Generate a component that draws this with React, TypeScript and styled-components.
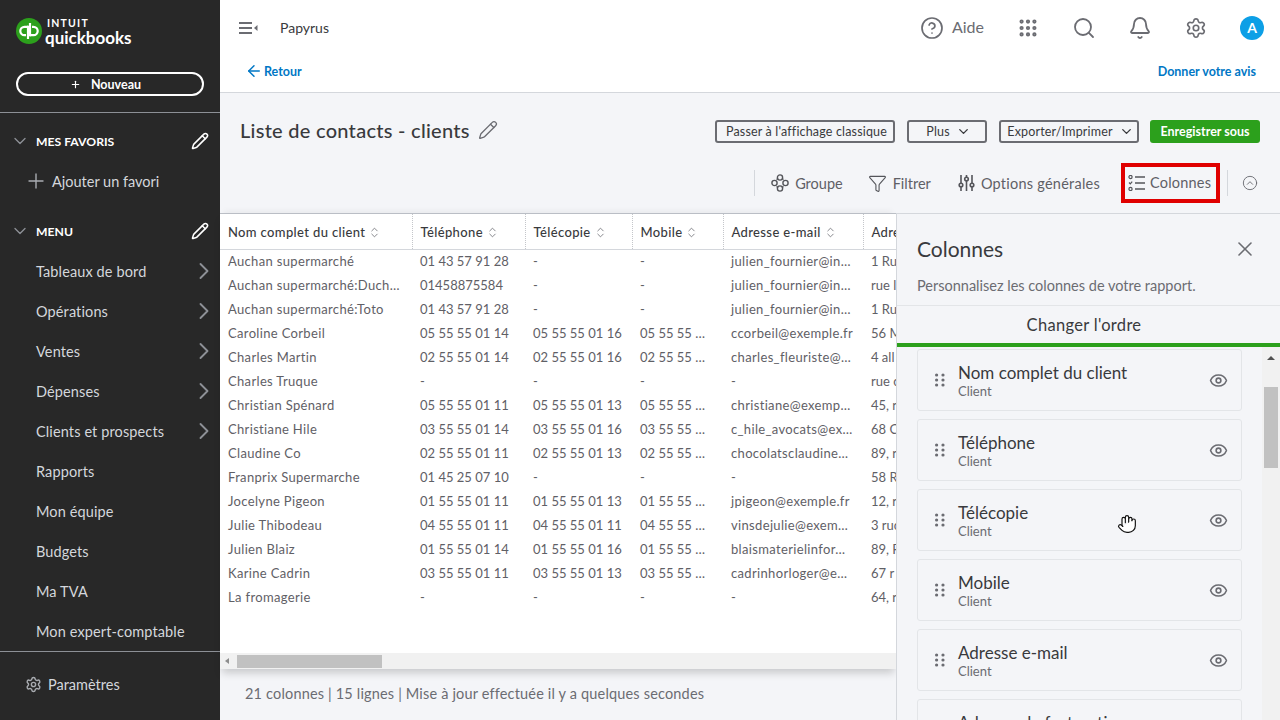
import styled, { createGlobalStyle } from "styled-components";
import {
  ArrowLeft,
  Bell,
  ChevronDown,
  ChevronRight,
  ChevronsUpDown,
  CircleChevronUp,
  CircleHelp,
  Eye,
  Funnel,
  Grip,
  Hand,
  Pencil,
  Plus,
  Search,
  Settings,
  X,
} from "lucide-react";

const FONT = `"Lato", "Open Sans", sans-serif`;

const GlobalStyle = createGlobalStyle`
  html, body {
    margin: 0;
    padding: 0;
    height: 100%;
    overflow: hidden;
    font-family: ${FONT};
    color: #393a3d;
    background: #f4f5f8;
  }
  * { box-sizing: border-box; }
`;

const Page = styled.div`
  display: flex;
  width: 1280px;
  height: 720px;
  overflow: hidden;
  position: relative;
`;

/* ---------- sidebar ---------- */
const Sidebar = styled.aside`
  width: 220px;
  flex: none;
  background: #282828;
  color: #d4d7dc;
  display: flex;
  flex-direction: column;
`;
const LogoRow = styled.div`
  height: 72px;
  padding: 18px 0 0 16px;
  display: flex;
  gap: 3px;
`;
const LogoWords = styled.div`
  display: flex;
  flex-direction: column;
  color: #fff;
`;
const LogoIntuit = styled.span`
  font-size: 10.5px;
  line-height: 11px;
  font-weight: 700;
  letter-spacing: 1.2px;
  margin-left: 2px;
`;
const LogoName = styled.span`
  font-size: 17px;
  line-height: 18px;
  font-weight: 700;
`;
const NewButton = styled.button`
  margin: 0 16px 16px;
  height: 24px;
  border: 2px solid #fff;
  border-radius: 12px;
  background: transparent;
  color: #fff;
  font: 700 12.5px ${FONT};
  display: flex;
  align-items: center;
  justify-content: center;
  gap: 10px;
  padding: 0 9px 0 0;
  flex: none;
`;
const Divider = styled.div`
  height: 1px;
  background: #8d9096;
  flex: none;
`;
const SectionHead = styled.div<{ $top?: number }>`
  display: flex;
  align-items: center;
  height: 40px;
  margin-top: ${(p) => p.$top ?? 0}px;
  padding: 0 11px 0 10px;
  color: #fff;
  font-size: 12.2px;
  font-weight: 700;
  flex: none;
  svg:first-child {
    color: #8d9096;
    margin-right: 6px;
  }
  span {
    flex: 1;
  }
`;
const NavList = styled.nav`
  display: flex;
  flex-direction: column;
  flex: 1;
`;
const NavItem = styled.div`
  height: 40px;
  display: flex;
  align-items: center;
  justify-content: space-between;
  padding: 0 2px 0 36px;
  font-size: 14.5px;
  letter-spacing: 0.12px;
  flex: none;
  svg {
    color: #8d9096;
  }
`;
const AddFavourite = styled(NavItem)`
  padding-left: 24px;
  justify-content: flex-start;
  gap: 4px;
  height: 38px;
  margin: 1px 0 11px;
  letter-spacing: 0;
`;
const SettingsRow = styled.div`
  display: flex;
  align-items: center;
  gap: 6px;
  height: 68px;
  padding: 0 0 3px 25px;
  font-size: 14.5px;
  flex: none;
  svg {
    color: #a9acb1;
  }
`;

/* ---------- main ---------- */
const Main = styled.main`
  flex: 1;
  min-width: 0;
  display: flex;
  flex-direction: column;
`;
const TopBar = styled.header`
  height: 52px;
  background: #fff;
  display: flex;
  align-items: center;
  padding: 3px 16px 0 19px;
  flex: none;
  color: #6b6c72;
`;
const Company = styled.span`
  margin-left: 22px;
  font-size: 14px;
  color: #393a3d;
  flex: 1;
`;
const TopIcon = styled.span`
  width: 56px;
  display: flex;
  justify-content: center;
`;
const HelpLink = styled.span`
  display: flex;
  align-items: center;
  gap: 8px;
  font-size: 16px;
  margin-right: 16px;
  color: #6b6c72;
  span {
    margin-top: -3px;
  }
`;
const Avatar = styled.span`
  width: 24px;
  height: 24px;
  border-radius: 50%;
  background: #0d9fe6;
  color: #fff;
  font-size: 14px;
  font-weight: 700;
  display: flex;
  align-items: center;
  justify-content: center;
  margin-left: 16px;
`;
const BackBar = styled.div`
  height: 41px;
  background: #fff;
  border-bottom: 1px solid #d4d7dc;
  display: flex;
  align-items: center;
  justify-content: space-between;
  padding: 0 24px 2px 25px;
  font-size: 12.5px;
  font-weight: 700;
  color: #0077c5;
  flex: none;
`;
const BackLink = styled.span`
  display: flex;
  align-items: center;
  gap: 1px;
`;
const TitleRow = styled.div`
  height: 70px;
  display: flex;
  align-items: center;
  justify-content: space-between;
  padding: 6px 20px 0 20px;
  flex: none;
`;
const Title = styled.h1`
  margin: -2px 0 0;
  font-size: 20px;
  font-weight: 500;
  letter-spacing: 0.27px;
  display: flex;
  align-items: center;
  gap: 8px;
  svg {
    color: #6b6c72;
  }
`;
const HeaderActions = styled.div`
  display: flex;
  gap: 12px;
`;
const OutlineButton = styled.button<{ $width: number }>`
  height: 23px;
  width: ${(p) => p.$width}px;
  padding: 0 0 0 3px;
  border: 2px solid #6b6c72;
  border-radius: 3px;
  background: transparent;
  color: #393a3d;
  font: 12.5px ${FONT};
  letter-spacing: 0.17px;
  display: flex;
  align-items: center;
  justify-content: center;
  gap: 6px;
`;
const SaveButton = styled.button`
  height: 23px;
  width: 110px;
  margin-left: -1px;
  border: 0;
  border-radius: 3px;
  background: #2ca01c;
  color: #fff;
  font: 700 12.5px ${FONT};
`;
const Toolbar = styled.div`
  height: 50px;
  display: flex;
  align-items: center;
  justify-content: flex-end;
  padding: 0 22px 10px 0;
  flex: none;
  color: #6b6c72;
  font-size: 14.5px;
`;
const ToolSeparator = styled.span`
  width: 1px;
  height: 26px;
  background: #d4d7dc;
`;
const ToolAction = styled.span<{ $gap: number; $tracking?: number }>`
  display: flex;
  align-items: center;
  gap: 6px;
  margin-left: ${(p) => p.$gap}px;
  letter-spacing: ${(p) => p.$tracking ?? 0}px;
  color: #5f6066;
  svg {
    color: #54555a;
  }
`;
const Highlight = styled.span`
  display: flex;
  align-items: center;
  gap: 5px;
  height: 40px;
  width: 99px;
  margin: 0 7px 0 21px;
  padding: 0 0 1px 3px;
  border: 4px solid #e00000;
  color: #5f6066;
  letter-spacing: 0.2px;
  white-space: nowrap;
`;
const CollapseIcon = styled.span`
  display: flex;
  margin-left: 14px;
  color: #6b6c72;
`;
const Work = styled.div`
  flex: 1;
  min-height: 0;
  display: flex;
`;
const ReportColumn = styled.section`
  flex: 1;
  min-width: 0;
  display: flex;
  flex-direction: column;
`;
const TableCard = styled.div`
  height: 456px;
  flex: none;
  background: #fff;
  display: flex;
  flex-direction: column;
  border-top: 1px solid #babec5;
  box-shadow: 0 -6px 6px -4px rgba(0, 0, 0, 0.05), 0 6px 8px -2px rgba(0, 0, 0, 0.18);
`;
const TableClip = styled.div`
  flex: 1;
  overflow: hidden;
`;
const Table = styled.table`
  border-collapse: collapse;
  table-layout: fixed;
  width: 676px;
`;
const HeadCell = styled.th`
  height: 35px;
  padding: 1px 0 0 8px;
  text-align: left;
  font-size: 13px;
  font-weight: 500;
  letter-spacing: 0.36px;
  color: #393a3d;
  border-bottom: 1px solid #d4d7dc;
  border-right: 1px dotted #c4c6ca;
  white-space: nowrap;
  overflow: hidden;
  &:last-child {
    border-right: 0;
  }
  svg {
    vertical-align: -2px;
    margin-left: 3px;
    color: #6b6c72;
  }
`;
const BodyCell = styled.td<{ $spaced: boolean }>`
  height: 24px;
  padding: 0 0 0 8px;
  font-size: 13px;
  letter-spacing: ${(p) => (p.$spaced ? "0.34px" : "0")};
  color: #5f6066;
  white-space: nowrap;
  overflow: hidden;
`;
const HScroll = styled.div`
  height: 16px;
  flex: none;
  background: #f1f1f1;
  display: flex;
  align-items: center;
  padding-left: 5px;
`;
const ArrowLeftTip = styled.span`
  width: 0;
  height: 0;
  border: 3px solid transparent;
  border-left-width: 0;
  border-right: 4px solid #8d8d8d;
  margin-right: 8px;
`;
const HThumb = styled.span`
  width: 145px;
  height: 13px;
  background: #c1c1c1;
`;
const ReportFooter = styled.div`
  padding: 16px 0 0 25px;
  font-size: 14.5px;
  letter-spacing: 0.17px;
  color: #6b6c72;
`;

/* ---------- side panel ---------- */
const Panel = styled.aside`
  width: 384px;
  flex: none;
  background: #f4f5f8;
  border-left: 1px solid #d4d7dc;
  border-top: 1px solid #d4d7dc;
  display: flex;
  flex-direction: column;
  position: relative;
`;
const PanelHead = styled.div`
  height: 92px;
  padding: 22px 23px 0 20px;
  border-bottom: 1px solid #e3e5e8;
  flex: none;
`;
const PanelTitleRow = styled.div`
  display: flex;
  align-items: center;
  justify-content: space-between;
  font-size: 21px;
  line-height: 26px;
  svg {
    color: #6b6c72;
  }
`;
const PanelHint = styled.p`
  margin: 15px 0 0;
  font-size: 14.5px;
  color: #6b6c72;
`;
const TabLabel = styled.div`
  height: 41px;
  border-bottom: 4px solid #2ca01c;
  display: flex;
  align-items: center;
  justify-content: center;
  padding-right: 9px;
  font-size: 16.5px;
  letter-spacing: 0.3px;
  flex: none;
`;
const PanelBody = styled.div`
  flex: 1;
  min-height: 0;
  display: flex;
  justify-content: space-between;
  overflow: hidden;
`;
const CardList = styled.div`
  width: 365px;
  padding: 2px 20px 0 20px;
  display: flex;
  flex-direction: column;
  gap: 8px;
`;
const ColumnCard = styled.div`
  height: 62px;
  flex: none;
  border: 1px solid #e3e5e8;
  border-radius: 3px;
  display: flex;
  align-items: center;
  padding: 0 13px 0 17px;
  svg {
    color: #6b6c72;
    flex: none;
  }
`;
const CardText = styled.div`
  flex: 1;
  margin-left: 13px;
`;
const CardName = styled.div`
  font-size: 17px;
  line-height: 22px;
  color: #393a3d;
`;
const CardKind = styled.div`
  font-size: 13px;
  line-height: 15px;
  color: #6b6c72;
`;
const VScroll = styled.div`
  width: 18px;
  display: flex;
  flex-direction: column;
  align-items: center;
  padding-top: 9px;
  background: #f1f1f1;
`;
const ArrowUpTip = styled.span`
  width: 0;
  height: 0;
  border: 4px solid transparent;
  border-top-width: 0;
  border-bottom: 4px solid #505050;
`;
const VThumb = styled.span`
  width: 14px;
  height: 81px;
  margin-top: 27px;
  background: #c1c1c1;
`;
const Cursor = styled.span`
  position: absolute;
  left: 220px;
  top: 300px;
  display: flex;
  color: #111;
  svg {
    fill: #fff;
  }
`;

/* ---------- drawings ---------- */
const QbLogo = () => (
  <svg width="26" height="26" viewBox="0 0 26 26">
    <circle cx="13" cy="13" r="13" fill="#2ca01c" />
    <g fill="none" stroke="#fff" strokeWidth="2.2">
      <path d="M12 8.8H8.5a4.2 4.2 0 0 0 0 8.4H10" />
      <path d="M12 7.7V21" />
      <path d="M14 17.2h3.5a4.2 4.2 0 0 0 0-8.4H16" />
      <path d="M14 18.3V5" />
    </g>
  </svg>
);

const MenuIcon = () => (
  <svg width="19" height="14" viewBox="0 0 19 14" fill="#6b6c72">
    <rect x="0" y="1" width="13" height="2" />
    <rect x="0" y="6" width="13" height="2" />
    <rect x="0" y="11" width="13" height="2" />
    <path d="M18.5 4v6L15 7z" />
  </svg>
);

const GroupIcon = () => (
  <svg width="18" height="18" viewBox="0 0 18 18" fill="none" stroke="currentColor" strokeWidth="1.4">
    <circle cx="9" cy="3.5" r="2.6" />
    <circle cx="9" cy="14.5" r="2.6" />
    <circle cx="3.5" cy="9" r="2.6" />
    <circle cx="14.5" cy="9" r="2.6" />
    <path d="M5.5 5.5l1.5-1M11 4.5l1.5 1M5.5 12.5l1.5 1M11 13.5l1.5-1" />
  </svg>
);

const SlidersIcon = () => (
  <svg width="17" height="18" viewBox="0 0 17 18" fill="none" stroke="currentColor" strokeWidth="1.6">
    <path d="M3 1v8M3 13v4M8.5 1v2M8.5 7v10M14 1v8M14 13v4" />
    <circle cx="3" cy="11" r="1.8" />
    <circle cx="8.5" cy="5" r="1.8" />
    <circle cx="14" cy="11" r="1.8" />
  </svg>
);

const ColumnsIcon = () => (
  <svg width="17" height="16" viewBox="0 0 17 16" fill="none" stroke="#54555a" strokeWidth="1.2">
    <circle cx="2.5" cy="2" r="1.6" />
    <path d="M1 7.5l1.3 1.3L4.2 6.6" />
    <circle cx="2.5" cy="14" r="1.6" />
    <path d="M7 2h10M7 8h10M7 14h10" strokeWidth="1.5" />
  </svg>
);

const DragDots = () => (
  <svg width="10" height="14" viewBox="0 0 10 14" fill="#6b6c72">
    {[2, 7, 12].map((y) => (
      <g key={y}>
        <circle cx="1.6" cy={y} r="1.6" />
        <circle cx="8" cy={y} r="1.6" />
      </g>
    ))}
  </svg>
);

/* ---------- data ---------- */
const columns = [
  { label: "Nom complet du client", width: 192 },
  { label: "Téléphone", width: 113 },
  { label: "Télécopie", width: 107 },
  { label: "Mobile", width: 91 },
  { label: "Adresse e-mail", width: 140 },
  { label: "Adresse de facturation", width: 33 },
];

const rows = [
  ["Auchan supermarché", "01 43 57 91 28", "-", "-", "julien_fournier@in…", "1 Ru"],
  ["Auchan supermarché:Duch…", "01458875584", "-", "-", "julien_fournier@in…", "rue l"],
  ["Auchan supermarché:Toto", "01 43 57 91 28", "-", "-", "julien_fournier@in…", "1 Ru"],
  ["Caroline Corbeil", "05 55 55 01 14", "05 55 55 01 16", "05 55 55 …", "ccorbeil@exemple.fr", "56 M"],
  ["Charles Martin", "02 55 55 01 14", "02 55 55 01 16", "02 55 55 …", "charles_fleuriste@…", "4 all"],
  ["Charles Truque", "-", "-", "-", "-", "rue c"],
  ["Christian Spénard", "05 55 55 01 11", "05 55 55 01 13", "05 55 55 …", "christiane@exemp…", "45, r"],
  ["Christiane Hile", "03 55 55 01 14", "03 55 55 01 16", "03 55 55 …", "c_hile_avocats@ex…", "68 C"],
  ["Claudine Co", "02 55 55 01 11", "02 55 55 01 13", "02 55 55 …", "chocolatsclaudine…", "89, r"],
  ["Franprix Supermarche", "01 45 25 07 10", "-", "-", "-", "58 R"],
  ["Jocelyne Pigeon", "01 55 55 01 11", "01 55 55 01 13", "01 55 55 …", "jpigeon@exemple.fr", "12, r"],
  ["Julie Thibodeau", "04 55 55 01 11", "04 55 55 01 11", "04 55 55 …", "vinsdejulie@exem…", "3 ruc"],
  ["Julien Blaiz", "01 55 55 01 14", "01 55 55 01 16", "01 55 55 …", "blaismaterielinfor…", "89, F"],
  ["Karine Cadrin", "03 55 55 01 11", "03 55 55 01 13", "03 55 55 …", "cadrinhorloger@e…", "67 r"],
  ["La fromagerie", "-", "-", "-", "-", "64, r"],
];

const navItems = [
  { label: "Tableaux de bord", more: true },
  { label: "Opérations", more: true },
  { label: "Ventes", more: true },
  { label: "Dépenses", more: true },
  { label: "Clients et prospects", more: true },
  { label: "Rapports", more: false },
  { label: "Mon équipe", more: false },
  { label: "Budgets", more: false },
  { label: "Ma TVA", more: false },
  { label: "Mon expert-comptable", more: false },
];

const panelColumns = ["Nom complet du client", "Téléphone", "Télécopie", "Mobile", "Adresse e-mail", "Adresse de facturation"];

const App = () => {
  return (
    <Page>
      <GlobalStyle />
      <Sidebar>
        <LogoRow>
          <QbLogo />
          <LogoWords>
            <LogoIntuit>INTUIT</LogoIntuit>
            <LogoName>quickbooks</LogoName>
          </LogoWords>
        </LogoRow>
        <NewButton>
          <Plus size={11} strokeWidth={2.5} /> Nouveau
        </NewButton>
        <Divider />
        <SectionHead $top={8}>
          <ChevronDown size={20} strokeWidth={1.6} />
          <span>MES FAVORIS</span>
          <Pencil size={18} strokeWidth={2} />
        </SectionHead>
        <AddFavourite>
          <Plus size={24} strokeWidth={1.4} color="#a9acb1" /> Ajouter un favori
        </AddFavourite>
        <SectionHead>
          <ChevronDown size={20} strokeWidth={1.6} />
          <span>MENU</span>
          <Pencil size={18} strokeWidth={2} />
        </SectionHead>
        <NavList>
          {navItems.map((item) => (
            <NavItem key={item.label}>
              {item.label}
              {item.more && <ChevronRight size={28} strokeWidth={1.6} />}
            </NavItem>
          ))}
        </NavList>
        <Divider />
        <SettingsRow>
          <Settings size={17} /> Paramètres
        </SettingsRow>
      </Sidebar>
      <Main>
        <TopBar>
          <MenuIcon />
          <Company>Papyrus</Company>
          <HelpLink>
            <CircleHelp size={24} strokeWidth={1.7} /> <span>Aide</span>
          </HelpLink>
          <TopIcon>
            <Grip size={22} strokeWidth={2.6} />
          </TopIcon>
          <TopIcon>
            <Search size={24} strokeWidth={1.8} />
          </TopIcon>
          <TopIcon>
            <Bell size={24} strokeWidth={1.8} />
          </TopIcon>
          <TopIcon>
            <Settings size={22} strokeWidth={1.8} />
          </TopIcon>
          <Avatar>A</Avatar>
        </TopBar>
        <BackBar>
          <BackLink>
            <ArrowLeft size={18} strokeWidth={2} /> Retour
          </BackLink>
          <span>Donner votre avis</span>
        </BackBar>
        <TitleRow>
          <Title>
            Liste de contacts - clients <Pencil size={20} strokeWidth={1.6} />
          </Title>
          <HeaderActions>
            <OutlineButton $width={180}>Passer à l'affichage classique</OutlineButton>
            <OutlineButton $width={80}>
              Plus <ChevronDown size={15} strokeWidth={2.2} />
            </OutlineButton>
            <OutlineButton $width={140}>
              Exporter/Imprimer <ChevronDown size={15} strokeWidth={2.2} />
            </OutlineButton>
            <SaveButton>Enregistrer sous</SaveButton>
          </HeaderActions>
        </TitleRow>
        <Toolbar>
          <ToolSeparator />
          <ToolAction $gap={16}>
            <GroupIcon /> Groupe
          </ToolAction>
          <ToolAction $gap={25}>
            <Funnel size={19} strokeWidth={1.4} /> Filtrer
          </ToolAction>
          <ToolAction $gap={27} $tracking={0.24}>
            <SlidersIcon /> Options générales
          </ToolAction>
          <Highlight>
            <ColumnsIcon /> Colonnes
          </Highlight>
          <ToolSeparator />
          <CollapseIcon>
            <CircleChevronUp size={16} strokeWidth={1.4} />
          </CollapseIcon>
        </Toolbar>
        <Work>
          <ReportColumn>
            <TableCard>
              <TableClip>
                <Table>
                  <colgroup>
                    {columns.map((col) => (
                      <col key={col.label} width={col.width} />
                    ))}
                  </colgroup>
                  <thead>
                    <tr>
                      {columns.map((col) => (
                        <HeadCell key={col.label}>
                          {col.label}
                          <ChevronsUpDown size={13} strokeWidth={1.5} />
                        </HeadCell>
                      ))}
                    </tr>
                  </thead>
                  <tbody>
                    {rows.map((row) => (
                      <tr key={row[0]}>
                        {row.map((cell, i) => (
                          <BodyCell key={i} $spaced={i === 0 || i === 4}>
                            {cell}
                          </BodyCell>
                        ))}
                      </tr>
                    ))}
                  </tbody>
                </Table>
              </TableClip>
              <HScroll>
                <ArrowLeftTip />
                <HThumb />
              </HScroll>
            </TableCard>
            <ReportFooter>21 colonnes | 15 lignes | Mise à jour effectuée il y a quelques secondes</ReportFooter>
          </ReportColumn>
          <Panel>
            <PanelHead>
              <PanelTitleRow>
                Colonnes <X size={24} strokeWidth={1.6} />
              </PanelTitleRow>
              <PanelHint>Personnalisez les colonnes de votre rapport.</PanelHint>
            </PanelHead>
            <TabLabel>Changer l'ordre</TabLabel>
            <PanelBody>
              <CardList>
                {panelColumns.map((name) => (
                  <ColumnCard key={name}>
                    <DragDots />
                    <CardText>
                      <CardName>{name}</CardName>
                      <CardKind>Client</CardKind>
                    </CardText>
                    <Eye size={19} strokeWidth={2} />
                  </ColumnCard>
                ))}
              </CardList>
              <VScroll>
                <ArrowUpTip />
                <VThumb />
              </VScroll>
            </PanelBody>
            <Cursor>
              <Hand size={20} strokeWidth={1.4} />
            </Cursor>
          </Panel>
        </Work>
      </Main>
    </Page>
  );
};

export default App;
